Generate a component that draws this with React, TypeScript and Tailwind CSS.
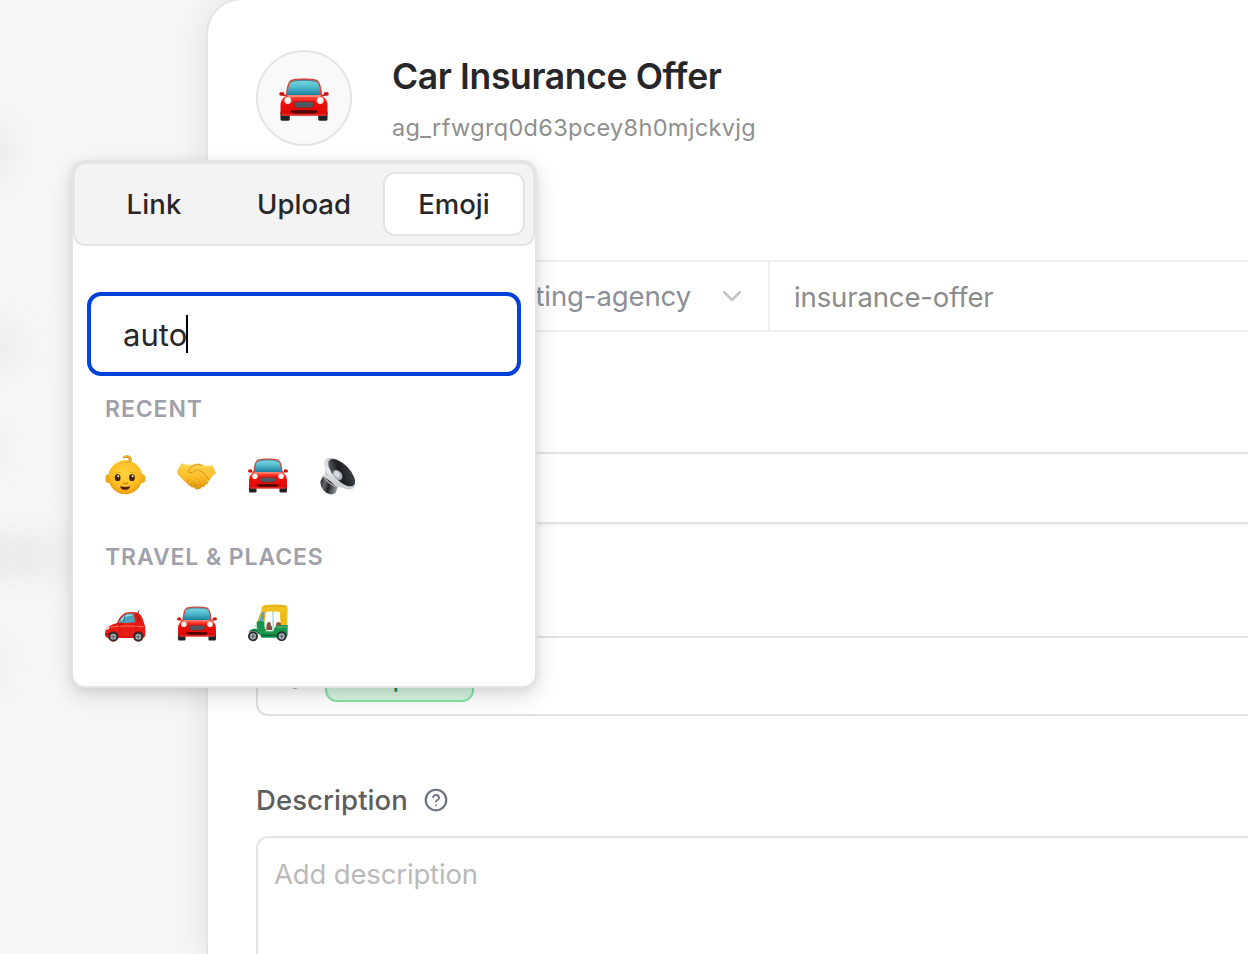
import React from "react";

function FrontCar({ className }: { className: string }) {
  return (
    <svg viewBox="0 0 150 130" className={className}>
      <defs>
        <linearGradient id="glass" x1="0" y1="0" x2="0" y2="1">
          <stop offset="0" stopColor="#7ddbe4" />
          <stop offset="0.5" stopColor="#4db7cb" />
          <stop offset="1" stopColor="#1c7f9f" />
        </linearGradient>
        <linearGradient id="paint" x1="0" y1="0" x2="0" y2="1">
          <stop offset="0" stopColor="#ff5a4a" />
          <stop offset="0.35" stopColor="#f31108" />
          <stop offset="1" stopColor="#d60a06" />
        </linearGradient>
      </defs>
      <rect x="4" y="100" width="28" height="29" rx="4" fill="#1f2223" />
      <rect x="118" y="100" width="28" height="29" rx="4" fill="#1f2223" />
      <ellipse cx="8" cy="48" rx="8" ry="6" fill="#d01510" />
      <ellipse cx="142" cy="48" rx="8" ry="6" fill="#d01510" />
      <path d="M8 50 L24 54 M142 50 L126 54" stroke="#b5120e" strokeWidth="4" />
      <path d="M20 56 C22 30 25 14 35 6 C47 0 103 0 115 6 C125 14 128 30 130 56Z" fill="#d3453c" />
      <path d="M26 52 C27 30 30 16 37 10 C50 5 100 5 113 10 C120 16 123 30 124 52Z" fill="url(#glass)" />
      <path d="M35 13 C50 5 100 5 115 13" stroke="#36505c" strokeWidth="2" fill="none" />
      <path d="M24 52 H126 C138 57 146 68 146 82 V106 Q146 114 138 114 H12 Q4 114 4 106 V82 C4 68 12 57 24 52Z" fill="url(#paint)" />
      <path d="M28 55 H122" stroke="#ff8c7b" strokeWidth="5" strokeLinecap="round" />
      <path d="M6 88 H144" stroke="#d50c06" strokeWidth="2" />
      <circle cx="26" cy="68" r="10.5" fill="#f5e5e2" />
      <circle cx="124" cy="68" r="10.5" fill="#f5e5e2" />
      <circle cx="25" cy="67" r="6" fill="#ffffff" />
      <circle cx="125" cy="67" r="6" fill="#ffffff" />
      <path d="M47 73 Q75 70 103 73 Q107 73 105 78 L101 87 Q100 90 96 90 H54 Q50 90 49 87 L45 78 Q43 73 47 73Z" fill="#56616b" stroke="#8d1513" strokeWidth="2" />
      <path d="M49 79 H101 M51 84 H99" stroke="#35414b" strokeWidth="1.5" />
      <path d="M35 98 Q75 95 115 98 V102 Q112 107 105 107 H45 Q38 107 35 102Z" fill="#4a0806" />
      <path d="M8 112 H142" stroke="#f0504a" strokeWidth="3" />
    </svg>
  );
}

function Baby() {
  return (
    <svg viewBox="0 0 126 126" className="size-[42px]">
      <defs>
        <radialGradient id="skin" cx="0.5" cy="0.4" r="0.6">
          <stop offset="0" stopColor="#ffd23d" />
          <stop offset="0.7" stopColor="#fbbd22" />
          <stop offset="1" stopColor="#e79a12" />
        </radialGradient>
      </defs>
      <ellipse cx="10" cy="71" rx="9" ry="13" fill="#f0aa1c" />
      <ellipse cx="112" cy="71" rx="9" ry="13" fill="#f0aa1c" />
      <ellipse cx="61" cy="67" rx="51" ry="51" fill="url(#skin)" />
      <path d="M52 8 C58 -4 80 -1 81 13 C81 24 67 27 57 22 C67 22 75 16 70 11 C66 7 57 12 52 8Z" fill="#dc9720" />
      <path d="M57 6 C65 0 76 4 77 13 C77 19 70 22 64 22" stroke="#f6c54b" strokeWidth="3" fill="none" />
      <path d="M31 56 Q38 50 46 53 M76 53 Q84 50 91 56" stroke="#e1a01e" strokeWidth="2.5" fill="none" />
      <ellipse cx="38" cy="68" rx="8.5" ry="10" fill="#3c210d" />
      <ellipse cx="81" cy="68" rx="8.5" ry="10" fill="#3c210d" />
      <circle cx="40" cy="64" r="3" fill="#fff" />
      <circle cx="83" cy="64" r="3" fill="#fff" />
      <path d="M56 84 Q61 89 67 84" stroke="#cf7c13" strokeWidth="4" fill="none" strokeLinecap="round" />
      <path d="M45 94 Q60 98 76 94 Q73 105 60 105 Q48 105 45 94Z" fill="#492006" />
      <path d="M54 103 Q60 100 67 103 Q60 106 54 103Z" fill="#b5422c" />
    </svg>
  );
}

function Handshake() {
  return (
    <svg viewBox="3 2 126 126" className="size-[42px]">
      <defs>
        <linearGradient id="hand" x1="0" y1="0" x2="0" y2="1">
          <stop offset="0" stopColor="#ffd34a" />
          <stop offset="0.65" stopColor="#f8b722" />
          <stop offset="1" stopColor="#db9013" />
        </linearGradient>
      </defs>
      <path d="M17 27 L2 51 Q2 58 10 64 L20 76 Q27 83 33 85 Q33 93 41 93 Q45 102 54 98 Q58 108 67 104 Q74 106 77 98 Q87 100 88 91 Q97 90 97 82 Q103 74 109 65 L121 57 L109 33 Q91 37 77 31 Q65 24 50 31 Q32 33 17 27Z" fill="url(#hand)" />
      <path d="M79 33 Q64 26 51 34 Q40 43 37 52 Q41 59 50 54 Q57 48 64 46 Q75 50 84 57 L98 76" fill="none" stroke="#cf8a15" strokeWidth="2.5" strokeLinecap="round" />
      <path d="M73 65 L89 83 M63 72 L77 92 M54 79 L66 97" fill="none" stroke="#dfa01c" strokeWidth="2" strokeLinecap="round" />
      <path d="M33 84 L40 76 M43 92 L50 83 M55 98 L60 90" stroke="#c27d10" strokeWidth="2.5" strokeLinecap="round" />
      <path d="M19 31 Q32 37 45 35 M80 36 Q96 41 107 37" stroke="#ffe06a" strokeWidth="3" fill="none" />
    </svg>
  );
}

function Speaker() {
  return (
    <svg viewBox="2 1 126 126" className="size-[42px]">
      <defs>
        <linearGradient id="rim" x1="0" y1="0" x2="1" y2="1">
          <stop offset="0" stopColor="#aeb2b7" />
          <stop offset="0.5" stopColor="#e8ebef" />
          <stop offset="1" stopColor="#b4bac2" />
        </linearGradient>
        <linearGradient id="magnet" x1="0" y1="0" x2="1" y2="0.3">
          <stop offset="0" stopColor="#151617" />
          <stop offset="0.35" stopColor="#63676a" />
          <stop offset="0.6" stopColor="#202224" />
          <stop offset="1" stopColor="#85898c" />
        </linearGradient>
        <linearGradient id="cone" x1="0" y1="1" x2="1" y2="0">
          <stop offset="0" stopColor="#77797c" />
          <stop offset="0.45" stopColor="#1b1d1f" />
          <stop offset="1" stopColor="#4a4d50" />
        </linearGradient>
      </defs>
      <path d="M12 63 L3 81 Q4 110 33 119 Q44 120 49 114 L55 96Z" fill="url(#magnet)" />
      <path d="M18 30 L16 62 L52 97 L96 101 L40 44Z" fill="#cdd1d6" />
      <path d="M11 63 Q24 87 54 98" stroke="#a5a8ab" strokeWidth="4" fill="none" />
      <ellipse cx="62" cy="57" rx="60" ry="30" transform="rotate(45 62 57)" fill="url(#rim)" />
      <ellipse cx="67" cy="54" rx="52" ry="24" transform="rotate(46 67 54)" fill="url(#cone)" />
      <ellipse cx="55" cy="61" rx="17" ry="12" transform="rotate(47 55 61)" fill="#aeb4bc" />
      <ellipse cx="53" cy="59" rx="10" ry="7" transform="rotate(47 53 59)" fill="#d6dae0" />
    </svg>
  );
}

function Wheel({ cx, cy, r }: { cx: number; cy: number; r: number }) {
  return (
    <g>
      <circle cx={cx} cy={cy} r={r} fill="#292d30" />
      <circle cx={cx} cy={cy} r={r * 0.63} fill="#aeb5bb" />
      <path d={`M${cx - r * 0.5} ${cy}h${r}M${cx} ${cy - r * 0.5}v${r}`} stroke="#626a70" strokeWidth="2.5" />
      <circle cx={cx} cy={cy} r={r * 0.2} fill="#50575c" />
    </g>
  );
}

function SideCar() {
  return (
    <svg viewBox="0 0 126 126" className="size-[42px]">
      <path d="M96 36 L102 23" stroke="#3c3c3c" strokeWidth="3" />
      <path d="M1 87 Q1 73 12 70 Q24 63 36 60 Q45 37 61 29 Q80 25 99 29 Q111 35 117 59 Q121 67 121 84 V97 Q119 105 110 105 H9 Q0 103 0 94Z" fill="#e71c15" />
      <path d="M40 59 Q49 40 63 33 Q76 30 85 31 L91 58 Q67 62 40 59Z" fill="#4ba4b8" />
      <path d="M49 53 Q55 41 66 37 L82 36" stroke="#8bdce4" strokeWidth="5" fill="none" />
      <path d="M60 34 L56 59" stroke="#2c6570" strokeWidth="2" />
      <path d="M94 33 Q103 34 108 57 L97 57Z" fill="#bc1912" />
      <path d="M16 72 Q60 66 116 71" stroke="#ff6f5e" strokeWidth="3" fill="none" />
      <path d="M43 64 Q42 85 53 101 H84 Q88 86 94 83 L92 64" stroke="#c8120d" strokeWidth="2" fill="none" />
      <ellipse cx="46" cy="63" rx="6" ry="4" fill="#ca1510" />
      <path d="M3 77 Q7 71 15 71 Q13 78 5 82Z" fill="#fff1ef" />
      <path d="M1 94 H12" stroke="#781916" strokeWidth="4" />
      <circle cx="25" cy="100" r="16" fill="#9b1310" />
      <circle cx="100" cy="100" r="16" fill="#9b1310" />
      <Wheel cx={25} cy={101} r={14} />
      <Wheel cx={100} cy={101} r={14} />
    </svg>
  );
}

function Rickshaw() {
  return (
    <svg viewBox="0 1 126 126" className="size-[42px]">
      <path d="M31 60 L44 21 L51 18 L47 58Z" fill="#4aa9c4" />
      <path d="M30 58 L44 20 M47 60 L53 20" stroke="#dfab12" strokeWidth="4" />
      <path d="M75 25 V91" stroke="#b5e0d2" strokeWidth="5" />
      <path d="M40 17 Q42 8 53 7 Q83 3 114 8 Q120 11 119 20 L118 67 H98 L95 27 Q65 25 42 28Z" fill="#f1c21d" />
      <path d="M49 10 Q57 17 65 8 Q71 17 82 8 Q90 17 99 8 Q106 17 114 10" stroke="#cf9b14" strokeWidth="2" fill="none" />
      <path d="M102 29 V66 M111 29 V66" stroke="#dba713" strokeWidth="2.5" />
      <path d="M55 76 Q55 58 63 58 Q70 58 68 67 L72 72 V82 H55Z" fill="#87503c" />
      <path d="M84 66 Q84 58 93 58 L99 62 V76 H84Z" fill="#92502f" />
      <path d="M26 59 L31 55 L49 57 L50 75 L56 86 H76 L80 74 Q86 68 96 67 H119 V94 Q119 105 109 105 H40 L35 88 L26 76Z" fill="#15964a" />
      <path d="M1 90 Q9 75 26 79 Q36 83 37 97 L30 93 Q19 80 1 90Z" fill="#158043" />
      <path d="M50 87 L78 87 M84 73 H115" stroke="#57bd71" strokeWidth="3" />
      <path d="M38 98 H86" stroke="#08653b" strokeWidth="5" />
      <circle cx="22" cy="71" r="4" fill="#dbe5e4" />
      <Wheel cx={15} cy={101} r={15} />
      <Wheel cx={101} cy={101} r={15} />
    </svg>
  );
}

function SidebarSmudges() {
  return (
    <div className="absolute inset-0 overflow-hidden">
      <div className="absolute -left-10 top-[120px] h-[62px] w-[50px] rounded-full bg-[#e9e9e9] blur-lg" />
      <div className="absolute -left-10 top-[318px] h-[56px] w-[66px] rounded-full bg-[#ededed] blur-lg" />
      <div className="absolute -left-10 top-[425px] h-[50px] w-[44px] rounded-full bg-[#ececec] blur-lg" />
      <div className="absolute -left-10 top-[538px] h-[36px] w-[106px] rounded-full bg-[#e8e8e8] blur-lg" />
      <div className="absolute -left-10 top-[645px] h-[44px] w-[46px] rounded-full bg-[#ebebeb] blur-lg" />
    </div>
  );
}

function EmojiPicker() {
  return (
    <div className="absolute left-[71px] top-[160px] h-[528px] w-[466px] rounded-[14px] border-2 border-[#e4e4e8] bg-white shadow-[0_8px_24px_rgba(0,0,0,0.13),0_3px_8px_rgba(0,0,0,0.07)]">
      <div className="grid h-[84px] grid-cols-3 gap-2 rounded-xl border-2 border-[#e4e4e5] bg-[#f3f3f3] p-2 text-[27.5px] font-medium text-[#27272a]">
        <button className="h-16 rounded-xl border-2 border-transparent pt-px tracking-[0.15px]">Link</button>
        <button className="h-16 rounded-xl border-2 border-transparent pt-px">Upload</button>
        <button className="h-16 rounded-xl border-2 border-[#e4e4e5] bg-white pt-px">Emoji</button>
      </div>
      <div className="mx-[14px] mt-[46px] flex h-[84px] items-center rounded-[14px] border-4 border-[#0242db] pl-8 text-[31px] text-[#27272a]">
        <span className="pt-0.5 tracking-[0.05px]">auto</span>
        <span className="-ml-px h-[38px] w-0.5 bg-black" />
      </div>
      <div className="pl-8">
        <h3 className="mt-[17px] h-8 text-[23px] font-semibold leading-8 tracking-[0.9px] text-[#a0a0a9]">RECENT</h3>
        <div className="mt-[30px] flex gap-[29.5px]">
          <Baby />
          <Handshake />
          <div className="size-[42px] pt-[3px]"><FrontCar className="h-[35px] w-10" /></div>
          <Speaker />
        </div>
        <h3 className="mt-[44px] h-8 text-[23px] font-semibold leading-8 tracking-[0.9px] text-[#a0a0a9]">TRAVEL &amp; PLACES</h3>
        <div className="mt-[30px] flex gap-[29.5px]">
          <SideCar />
          <div className="size-[42px] pt-[3px]"><FrontCar className="h-[35px] w-10" /></div>
          <Rickshaw />
        </div>
      </div>
    </div>
  );
}

export default function App() {
  return (
    <div className="relative flex h-[954px] w-[1248px] overflow-hidden bg-[#f7f7f7] font-['Inter',sans-serif]">
      <aside className="relative w-[206px] shrink-0"><SidebarSmudges /></aside>
      <main className="relative -mt-0.5 flex flex-1 flex-col rounded-tl-[36px] border-l-2 border-t-2 border-[#e4e4e8] bg-white pl-12 shadow-[0_4px_40px_rgba(0,0,0,0.10)]">
        <header className="mt-[50px] flex h-24 shrink-0">
          <div className="flex size-24 items-center justify-center rounded-full border-2 border-[#e4e4e5] bg-[#f9f9f9] pt-0.5">
            <FrontCar className="h-[43px] w-[50px]" />
          </div>
          <div className="ml-10">
            <h1 className="mt-[5px] text-[35.5px] font-semibold leading-[44px] tracking-[-0.37px] text-[#27272a]">Car Insurance Offer</h1>
            <p className="mt-[13px] text-[23.5px] leading-8 tracking-[0.33px] text-[#8f8f8f]">ag_rfwgrq0d63pcey8h0mjckvjg</p>
          </div>
        </header>
        <div className="mt-[114px] flex h-[72px] shrink-0 items-center rounded-l-xl border-2 border-r-0 border-[#f0f0f1] text-[27.5px]">
          <div className="flex h-full w-[512px] items-center justify-end border-r-2 border-[#f0f0f1] pr-[25px] text-[#8b8f98]">
            <span className="pt-px tracking-[-0.1px]">marketing-agency</span>
            <svg viewBox="0 0 22 14" className="ml-[30px] h-[14px] w-[22px]" fill="none" stroke="#c5c5c7" strokeWidth="2.5" strokeLinecap="round" strokeLinejoin="round"><path d="M3 3 L11 11 L19 3" /></svg>
          </div>
          <span className="ml-6 pt-[3px] tracking-[-0.13px] text-[#8b8b8b]">insurance-offer</span>
        </div>
        <div className="mt-[120px] h-[72px] shrink-0 rounded-l-xl border-2 border-r-0 border-[#e4e4e5] shadow-[0_2px_4px_rgba(0,0,0,0.05)]" />
        <div className="mt-[112px] flex h-20 shrink-0 items-center rounded-l-xl border-2 border-r-0 border-[#e0e0e1]">
          <svg viewBox="0 0 24 24" className="ml-[25px] mt-0.5 size-6" fill="none" stroke="#555" strokeWidth="2"><circle cx="12" cy="18" r="4.6" /></svg>
          <div className="ml-[18px] flex h-[52px] w-[149px] items-center justify-center rounded-xl border-2 border-[#86e5a5] bg-[#d8f6e1] pr-1.5 pt-1.5 text-[24px] font-medium text-[#208647]">Template</div>
        </div>
        <div className="mt-16 flex h-10 shrink-0 items-center">
          <span className="pt-px text-[27.5px] font-medium tracking-[0.08px] text-[#5e5e5e]">Description</span>
          <svg viewBox="0 0 24 24" className="ml-[15px] size-[26px]" fill="none" stroke="#6b7280" strokeWidth="2" strokeLinecap="round" strokeLinejoin="round">
            <circle cx="12" cy="12" r="9.5" />
            <path d="M9.3 9.4 a2.8 2.8 0 0 1 5.5 0.8 c0 1.8-2.8 2.1-2.8 3.2 M12 17 h.01" strokeWidth="1.7" />
          </svg>
        </div>
        <div className="mt-4 h-40 shrink-0 rounded-tl-xl border-l-2 border-t-2 border-[#e4e4e5] pl-4 pt-[15px] text-[27.5px] leading-[42px] tracking-[-0.15px] text-[#bababa]">Add description</div>
      </main>
      <EmojiPicker />
    </div>
  );
}
